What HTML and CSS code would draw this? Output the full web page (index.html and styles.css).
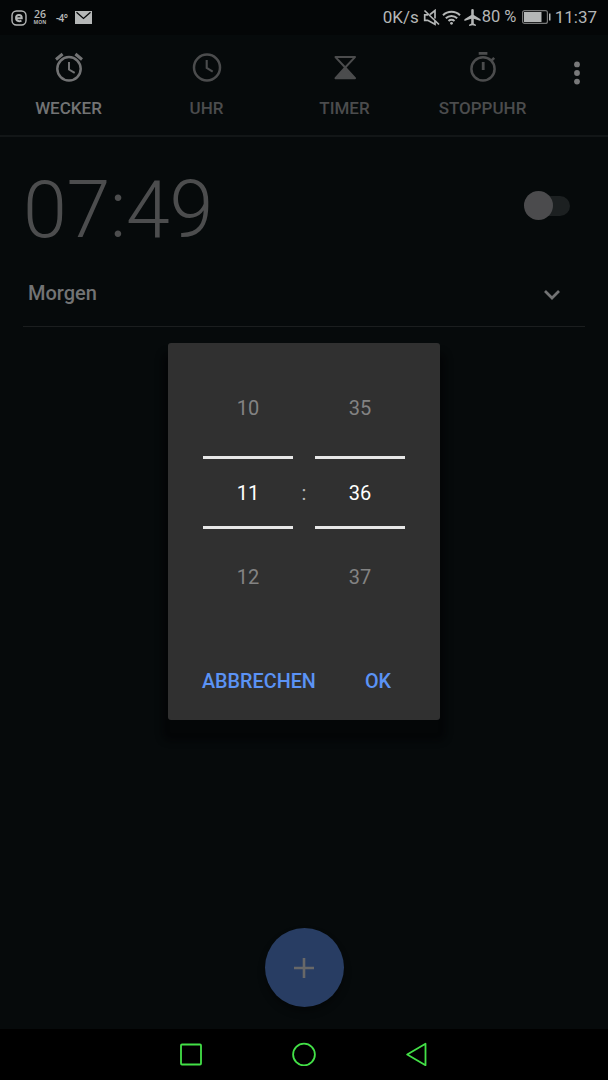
FILE: index.html
```html
<!DOCTYPE html>
<html lang="de">
<head>
<meta charset="utf-8">
<title>Wecker</title>
<link rel="stylesheet" href="styles.css">
</head>
<body>
<div class="screen">
  <header class="status">
    <div class="notices">
      <svg class="browser" width="16" height="16" viewBox="0 0 16 16"><rect x="1" y="1" width="14" height="14" rx="4.5" fill="none" stroke="currentColor" stroke-width="1.4"/><path d="M5 8.200h5.800C10.800 6.200 9.700 5 8 5S5 6.200 5 8.100s1.200 3.100 3.100 3.100c1 0 1.700-.3 2.300-.8" fill="none" stroke="currentColor" stroke-width="1.900"/></svg>
      <div class="date"><span class="day">26</span><span class="weekday">MON</span></div>
      <span class="temp">-4°</span>
      <svg class="mail" width="17" height="13" viewBox="0 0 17 13"><path d="M0 0h17v13H0z" fill="currentColor"/><path d="M1.500 1.300l7 6.200 7-6.200" fill="none" stroke="#050708" stroke-width="1.300"/></svg>
    </div>
    <div class="signals">
      <span class="speed">0K/s</span>
      <svg class="mute" width="17" height="17" viewBox="0 0 17 17" fill="none" stroke="currentColor" stroke-width="1.700"><path d="M5 5.800H1.700v5.500h3l7.300 4V12M7 5.500l5-4v8"/><path d="M1.500 1.500l14.500 14"/></svg>
      <svg class="wifi" width="19" height="15" viewBox="0 0 19 15" fill="none" stroke="currentColor" stroke-width="2"><path d="M1 5.200a12.300 12.300 0 0 1 17 0M3.800 8.200a8.300 8.300 0 0 1 11.400 0M6.500 11a4.400 4.400 0 0 1 6 0"/><circle cx="9.500" cy="13.300" r="1.400" fill="currentColor" stroke="none"/></svg>
      <svg class="plane" width="17" height="17" viewBox="2 2 20 20"><path d="M21.500 16v-2l-8-5V3.500a1.500 1.500 0 0 0-3 0V9l-8 5v2l8-2.500V19l-2.500 1.500V22l4-1 4 1v-1.500L13.500 19v-5.500z" fill="currentColor"/></svg>
      <span class="percent">80 %</span>
      <svg class="battery" width="29" height="14" viewBox="0 0 29 14"><rect x=".6" y=".6" width="24.800" height="12.800" rx="2" fill="none" stroke="#777878" stroke-width="1.200"/><path d="M2 2h17.500v10H2z" fill="currentColor"/><path d="M27 3.500h1.500v7H27z" fill="currentColor"/></svg>
      <span class="clock">11:37</span>
    </div>
  </header>
  <nav class="tabs">
    <div class="tab active">
      <svg class="tab-icon" viewBox="0 0 32 32" fill="none" stroke="currentColor" stroke-width="2.500"><circle cx="16" cy="17.800" r="11.700"/><path d="M16 11v7.500l5.700 3.400" stroke-width="2"/><path d="M3 8.500l6.600-5.500M29 8.500l-6.600-5.500" stroke-width="3"/></svg>
      <span>WECKER</span>
    </div>
    <div class="tab">
      <svg class="tab-icon" viewBox="0 0 32 32" fill="none" stroke="currentColor" stroke-width="2.500"><circle cx="16" cy="16.500" r="13"/><path d="M15.700 9v8l6 3.700" stroke-width="2.100"/></svg>
      <span>UHR</span>
    </div>
    <div class="tab">
      <svg class="tab-icon" viewBox="0 0 32 32" stroke="currentColor" stroke-width="2" stroke-linejoin="round"><path d="M6.500 6.100h19.500L16.200 16.500z" fill="none"/><path d="M16.200 16.500L6.500 27.200h19.500z" fill="currentColor"/></svg>
      <span>TIMER</span>
    </div>
    <div class="tab">
      <svg class="tab-icon" viewBox="0 0 32 32" fill="none" stroke="currentColor" stroke-width="2.500"><circle cx="16" cy="17.900" r="11.600"/><path d="M11.700 2.400h8.700" stroke-width="2.800"/><path d="M24.500 9.500l2.700-2.700"/><path d="M16.200 11v8" stroke-width="2.800"/></svg>
      <span>STOPPUHR</span>
    </div>
    <svg class="more" width="6" height="24" viewBox="0 0 6 24" fill="currentColor"><circle cx="3" cy="3.400" r="2.900"/><circle cx="3" cy="12" r="2.900"/><circle cx="3" cy="20.600" r="2.900"/></svg>
  </nav>
  <main class="alarm">
    <div class="alarm-row">
      <span class="alarm-time">07:49</span>
      <div class="toggle"><div class="knob"></div></div>
    </div>
    <div class="repeat-row">
      <span>Morgen</span>
      <svg width="16" height="10" viewBox="0 0 16 10" fill="none" stroke="currentColor" stroke-width="2.700"><path d="M1 1l7 7 7-7"/></svg>
    </div>
  </main>
  <div class="fab"><svg width="20" height="20" viewBox="0 0 20 20" stroke="#686868" stroke-width="2.600"><path d="M10 0v20M0 10h20"/></svg></div>
  <footer class="navbar">
    <svg width="24" height="24" viewBox="0 0 24 24"><rect x="2" y="2.500" width="20" height="20" rx="1"/></svg>
    <svg width="24" height="24" viewBox="0 0 24 24"><circle cx="12" cy="12.500" r="10.900"/></svg>
    <svg width="24" height="24" viewBox="0 0 24 24"><path d="M2.200 12.500L20.500 1.800v21.400z" stroke-linejoin="round"/></svg>
  </footer>
  <section class="dialog">
    <div class="picker">
      <div class="wheel"><span class="faded">10</span><span class="selected">11</span><span class="faded">12</span></div>
      <span class="colon">:</span>
      <div class="wheel"><span class="faded">35</span><span class="selected">36</span><span class="faded">37</span></div>
    </div>
    <div class="actions"><span>ABBRECHEN</span><span>OK</span></div>
  </section>
</div>
</body>
</html>
```
FILE: styles.css
```css
* { box-sizing: border-box; }
body { margin: 0; background: #060a0b; font-family: Roboto, sans-serif; }
svg { display: block; flex: none; }
.screen { position: relative; display: flex; flex-direction: column; width: 608px; height: 1080px; overflow: hidden; background: #060a0b; }

.status { display: flex; justify-content: space-between; height: 35px; padding: 0 11px; background: #040607; color: #b5b7b7; white-space: nowrap; }
.notices, .signals { display: flex; align-items: center; height: 35px; }
.date { display: flex; flex-direction: column; align-items: center; width: 14px; margin-left: 6px; font-family: "Open Sans", sans-serif; }
.day { font-size: 10.500px; line-height: 10px; font-weight: 600; }
.weekday { font-size: 5px; line-height: 7px; font-weight: 700; }
.temp { width: 12px; margin-left: 9px; font: 600 10px/12px "Noto Sans", sans-serif; letter-spacing: -.6px; }
.mail { margin-left: 7px; }
.signals { font-size: 17px; line-height: 20px; }
.speed { width: 37px; margin-top: -1px; }
.mute { margin-left: 3px; }
.wifi { margin-left: 2px; }
.plane { margin-left: 3px; }
.percent { width: 36px; margin: -1px 0 0 1px; font-size: 16.500px; }
.battery { margin: -1px 0 0 4px; }
.clock { margin: -1px 0 0 4px; }

.tabs { display: flex; height: 102px; border-bottom: 2px solid #121617; color: #4b4c4d; }
.tab { display: flex; flex-direction: column; align-items: center; width: 138px; padding: 16px 1px 0 0; font-size: 17px; font-weight: 500; line-height: 20px; }
.tab-icon { width: 32px; height: 32px; margin-bottom: 15px; }
.active { color: #727374; }
.more { margin: 26px 0 0 22px; color: #78797a; }

.alarm { display: flex; flex-direction: column; flex: 1; }
.alarm-row { display: flex; justify-content: space-between; height: 130px; padding: 26px 38px 0 23px; }
.alarm-time { font-size: 79px; font-weight: 300; line-height: 94px; color: #4c4d4e; letter-spacing: -.4px; }
.toggle { width: 42px; height: 20px; margin-top: 33px; border-radius: 10px; background: #1c2021; }
.knob { width: 29px; height: 29px; margin: -5px 0 0 -4px; border-radius: 50%; background: #4b4b4d; }
.repeat-row { display: flex; justify-content: space-between; align-items: center; height: 60px; margin: 0 23px; padding: 0 25px 8px 5px; border-bottom: 1px solid #1b1e1f; color: #727374; font-size: 20px; font-weight: 500; }
.repeat-row svg { margin-top: 5px; }

.fab { display: flex; align-items: center; justify-content: center; align-self: center; width: 79px; height: 79px; margin-bottom: 22px; border-radius: 50%; background: #283d63; box-shadow: 0 5px 7px rgba(0, 0, 0, .35); }
.navbar { display: flex; justify-content: center; gap: 89px; height: 51px; padding-top: 13px; background: #000; fill: none; stroke: #43e047; stroke-width: 1.800; }

.dialog { position: absolute; left: 168px; top: 343px; width: 272px; height: 377px; padding-top: 23px; border-radius: 3px; background: #303030; box-shadow: 0 15px 6px 6px rgba(3, 4, 5, .6); }
.picker { display: flex; justify-content: center; align-items: center; height: 253px; }
.wheel { width: 90px; text-align: center; font-size: 20px; }
.wheel span { display: block; }
.faded { height: 89px; line-height: 83px; color: #838383; }
.wheel .faded:last-child { line-height: 96px; }
.selected { height: 73px; border-top: 3px solid #e7e7e7; border-bottom: 3px solid #e7e7e7; line-height: 69px; color: #fff; }
.colon { width: 22px; text-align: center; color: #b7b7b7; font-size: 20px; }
.actions { display: flex; gap: 49px; margin: 51px 0 0 34px; color: #5b93f5; font-size: 19.800px; font-weight: 500; line-height: 24px; }
```
